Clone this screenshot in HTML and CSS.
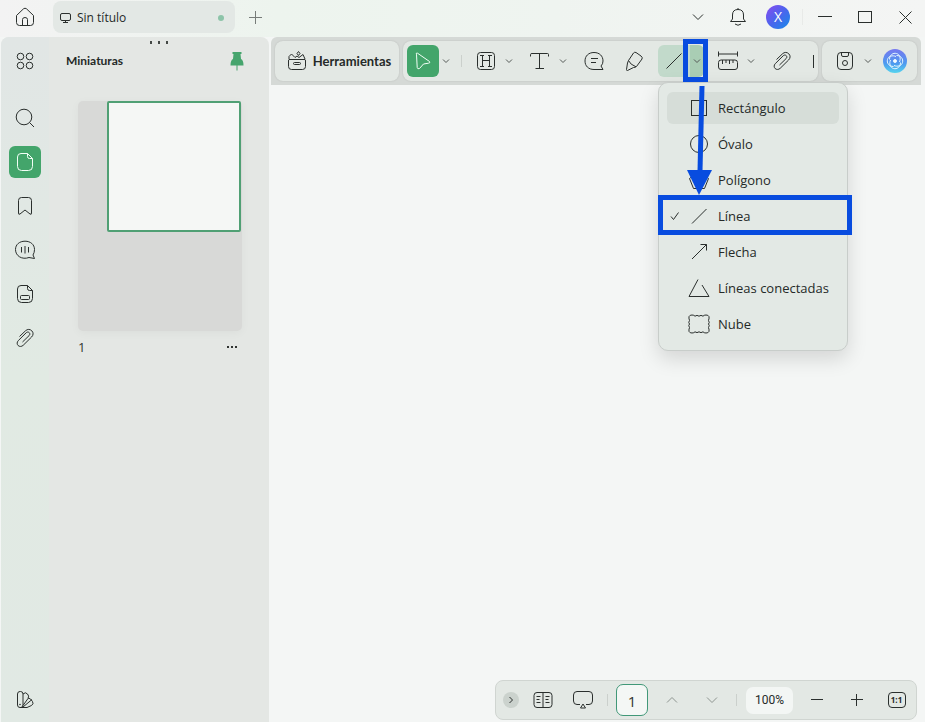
FILE: index.html
```html
<!DOCTYPE html>
<html lang="es">
<head>
<meta charset="utf-8">
<title>Sin título</title>
<link rel="stylesheet" href="styles.css">
</head>
<body>
<svg class="defs" aria-hidden="true">
  <symbol id="chev" viewBox="0 0 8 8"><path d="M1 2.500 4 5.500 7 2.500"/></symbol>
  <symbol id="clip" viewBox="0 0 20 20"><path d="M4.500 8.500 10.500 2.800C12.500.9 15 1 16.800 2.800s1.700 4.300-.2 6.200L8.200 17.300c-1.600 1.500-3.800 1.500-5.100.2s-1.300-3.400.2-4.900l8-7.900c1-.9 2.200-.9 3 0s.7 2-.2 2.900L7.500 14"/></symbol>
</svg>
<header class="titlebar">
  <button class="home" aria-label="Inicio"><svg width="20" height="20" viewBox="0 0 20 20"><path d="M1.500 8.500 8.500 1.800Q10 .6 11.500 1.800L18.500 8.500V15.500Q18.500 18.500 15.500 18.500H4.500Q1.500 18.500 1.500 15.500ZM7.500 18.500V12.500Q7.500 10.500 10 10.500T12.500 12.500V18.500"/></svg></button>
  <div class="tab">
    <svg width="13" height="12" viewBox="0 0 13 12"><rect x="1.500" y="1.500" width="10" height="7" rx="1.500"/><path d="M6.500 8.500V10.500M4 10.500H9"/></svg>
    <span>Sin título</span><i class="unsaved"></i>
  </div>
  <button class="new-tab" aria-label="Nueva pestaña"><svg class="gray" width="13" height="13" viewBox="0 0 13 13"><path d="M6.500 0V13M0 6.500H13"/></svg></button>
  <div class="window-tools">
    <button aria-label="Más"><svg width="12" height="8" viewBox="0 0 12 8"><path d="M1 1.500 6 6.500 11 1.500"/></svg></button>
    <button aria-label="Avisos"><svg width="18" height="20" viewBox="0 0 18 20"><path d="M1.500 14.500H16.500L14.500 12V8Q14.500 2.500 9 2.500T3.500 8V12ZM9 2.500V1M6 17Q9 19.500 12 17"/></svg></button>
    <button aria-label="Cuenta"><span class="avatar">X</span></button>
    <i class="window-sep"></i>
    <button aria-label="Minimizar"><svg width="14" height="14" viewBox="0 0 14 14"><path d="M0 6.500H14"/></svg></button>
    <button aria-label="Maximizar"><svg width="14" height="12" viewBox="0 0 14 12"><rect x=".5" y=".5" width="13" height="11"/></svg></button>
    <button aria-label="Cerrar"><svg width="13" height="13" viewBox="0 0 13 13"><path d="M.5.5 12.500 12.500M12.500.5.5 12.500"/></svg></button>
  </div>
</header>
<div class="workspace">
  <aside class="side">
    <nav class="rail">
      <button class="apps" aria-label="Aplicaciones"><svg width="18" height="18" viewBox="0 0 18 18"><circle cx="4.500" cy="4.500" r="3.300"/><circle cx="13.500" cy="4.500" r="3.300"/><circle cx="4.500" cy="13.500" r="3.300"/><circle cx="13.500" cy="13.500" r="3.300"/></svg></button>
      <button aria-label="Buscar"><svg width="20" height="20" viewBox="0 0 20 20"><circle cx="9" cy="9" r="7.800"/><path d="M14.500 14.500 19 19"/></svg></button>
      <button class="active" aria-label="Miniaturas"><svg width="18" height="20" viewBox="0 0 18 20"><path d="M5 1.500H11.500L16.500 6.500V14.500Q16.500 18.500 12.500 18.500H5.500Q1.500 18.500 1.500 14.500V5Q1.500 1.500 5 1.500ZM11.500 1.500V4.500Q11.500 6.500 13.500 6.500H16.500"/></svg></button>
      <button aria-label="Marcadores"><svg width="16" height="20" viewBox="0 0 16 20"><path d="M1.500 17V4.500Q1.500 1.500 4.500 1.500H11.500Q14.500 1.500 14.500 4.500V17Q14.500 19 13 18L8 14 3 18Q1.500 19 1.500 17Z"/></svg></button>
      <button aria-label="Comentarios"><svg width="22" height="20" viewBox="0 0 22 20"><path d="M19 15 20.500 18.500 15 17.500C8 20 1.500 16 1.500 9.500 1.500 4.500 5.500 1.200 11 1.200S20.500 4.500 20.500 9.500Q20.500 12.500 19 15ZM7.500 7V12.500M11 6V13.500M14.500 7V12.500"/></svg></button>
      <button aria-label="Campos"><svg width="18" height="20" viewBox="0 0 18 20"><path d="M5 1.500H11.500L16.500 6.500V14.500Q16.500 18.500 12.500 18.500H5.500Q1.500 18.500 1.500 14.500V5Q1.500 1.500 5 1.500ZM11.500 1.500V4.500Q11.500 6.500 13.500 6.500H16.500"/><rect x="4.500" y="11.500" width="9" height="4" rx="1"/></svg></button>
      <button aria-label="Adjuntos"><svg width="20" height="20"><use href="#clip"/></svg></button>
      <button class="theme" aria-label="Temas"><svg width="20" height="20" viewBox="0 0 20 20"><rect x="2.500" y="1.500" width="5.500" height="16" rx="2.500"/><path d="M8 4Q10.500 1.500 12.500 4 14.500 6 13 8.500L8 15.500M13 8Q15.500 8 17.500 11.500 19 14 16.500 15.500L12 17.500H5M17 9.500 8 17"/><circle cx="5" cy="14.500" r=".4"/></svg></button>
    </nav>
    <section class="thumbs">
      <div class="grip"><i></i><i></i><i></i></div>
      <div class="thumbs-head"><h2>Miniaturas</h2>
        <button aria-label="Fijar"><svg class="pin" width="14" height="20" viewBox="0 0 14 20"><path d="M2.500 1H11.500V3H10.500L11 8Q13.500 9 13.500 14.500H.5Q.5 9 3 8L3.500 3H2.500Z"/><path d="M6.500 13H7.500V19.500H6.500Z"/></svg></button>
      </div>
      <div class="thumb"><div class="page"></div></div>
      <div class="thumb-label"><span>1</span><button class="dots" aria-label="Opciones"><i></i><i></i><i></i></button></div>
    </section>
  </aside>
  <main class="document">
    <div class="toolbar">
      <button class="group tools"><svg width="20" height="20" viewBox="0 0 20 20"><path d="M2 8.500H18Q18.500 8.500 18.500 10V15.500Q18.500 18.500 15.500 18.500H4.500Q1.500 18.500 1.500 15.500V10Q1.500 8.500 2 8.500ZM2 8V5.500L4.500 3 8 6.500 10 5 12 6.500 16 3.500 18 8M11.500.5 13 2.500 11.500 4.500 10 2.500Z"/><rect x="6.500" y="11.500" width="7" height="2" rx="1"/></svg>Herramientas</button>
      <div class="group edit">
        <button class="tool selected" aria-label="Seleccionar"><svg width="18" height="18" viewBox="0 0 18 18"><path d="M2.500 2.200Q1.500.8 3.500 1.200L15.500 9.500Q16.500 11 14.500 11.200L9.500 12 5.500 16.500Q3.500 17.500 3.200 15.500Z"/></svg></button><button class="drop" aria-label="Opciones de selección"><svg width="8" height="8"><use href="#chev"/></svg></button>
        <i class="sep"></i>
        <button class="tool" aria-label="Resaltar"><svg width="20" height="20" viewBox="0 0 20 20"><rect x="1.500" y="1.500" width="17" height="17" rx="3"/><path d="M4 4.500H8M12 4.500H16M4 15.500H8M12 15.500H16M6.500 4.500V15.500M13.500 4.500V15.500M6.500 9.500H13.500"/></svg></button><button class="drop" aria-label="Opciones de resaltado"><svg width="8" height="8"><use href="#chev"/></svg></button>
        <button class="tool next" aria-label="Texto"><svg width="20" height="20" viewBox="0 0 20 20"><path d="M.5 5.500V3.500Q.5 2.500 2 2.500H17.500Q18.500 2.500 18.500 3.500V5.500M9.500 2.500V17.500M5.500 17.500H14"/></svg></button><button class="drop" aria-label="Opciones de texto"><svg width="8" height="8"><use href="#chev"/></svg></button>
        <button class="tool next" aria-label="Nota"><svg width="20" height="20" viewBox="0 0 20 20"><path d="M17 15 19 18.500H10C4.500 18.500 1 15 1 10S4.500 1.500 10 1.500 19 5 19 10Q19 13 17 15ZM7 7.500H14M7 11.500H12"/></svg></button>
        <button class="tool next" aria-label="Marcador"><svg width="20" height="20" viewBox="0 0 20 20"><path d="M4.500 9.500 9.500 2Q10.500.8 12 1.500L17 5Q18.800 6.300 18 8L12.500 15.500Q11.500 16.500 9.500 16.500L3.500 19.500Q2.500 19.800 2.500 18.500L3.500 12ZM4.500 9.500Q6 13.500 12 15.800"/></svg></button>
        <div class="shape next">
          <button class="tool" aria-label="Línea"><svg width="18" height="18" viewBox="0 0 18 18"><path d="M1.500 16.500 16.500 1.500"/></svg></button><button class="drop" aria-label="Elegir forma" aria-expanded="true"><svg width="8" height="8"><use href="#chev"/></svg></button>
          <div class="menu" role="menu">
            <button class="hover" role="menuitem"><svg width="22" height="20" viewBox="0 0 22 20"><rect x="3.500" y="2.500" width="15" height="15"/></svg>Rectángulo</button>
            <button role="menuitem"><svg width="22" height="20" viewBox="0 0 22 20"><circle cx="11" cy="10" r="8.500"/></svg>Óvalo</button>
            <button role="menuitem"><svg width="22" height="20" viewBox="0 0 22 20"><path d="M11 1.500 20.500 8.500 16.500 18.500H5.500L1.500 8.500Z"/></svg>Polígono</button>
            <button class="checked" role="menuitem"><svg width="10" height="10" viewBox="0 0 10 10"><path d="M1 5.500 3.500 8.500 8.500 1.500"/></svg><svg width="22" height="20" viewBox="0 0 22 20"><path d="M4 17.500 18.500 3"/></svg>Línea</button>
            <button role="menuitem"><svg width="22" height="20" viewBox="0 0 22 20"><path d="M4 17 18.500 2.500M12.500 2.500H18.500V8.500"/></svg>Flecha</button>
            <button role="menuitem"><svg width="22" height="20" viewBox="0 0 22 20"><path d="M10 1.500 1 18.500H21L14 7"/></svg>Líneas conectadas</button>
            <button role="menuitem"><svg width="22" height="20" viewBox="0 0 22 20"><path d="M1.500 6.500Q-.5 1 4 1 6 1 7 2.200 9 .5 11 2.200 13 .5 15 2.200 16 1 18 1 22.500 1 20.500 6.500 22 8.500 20.500 10 22 11.500 20.500 13.500 22.500 19 18 19 16 19 15 17.800 13 19.500 11 17.800 9 19.500 7 17.800 6 19 4 19-.5 19 1.500 13.500 0 11.500 1.500 10 0 8.500 1.500 6.500Z"/></svg>Nube</button>
          </div>
          <svg class="callout" width="196" height="198" viewBox="0 0 196 198" aria-hidden="true"><rect class="frame" x="27.500" y="4.500" width="20" height="38"/><rect class="frame" x="2.500" y="160.500" width="189" height="35"/><path class="shaft" d="M44 49 42 134"/><path class="head" d="M29 133H54L41 158Z"/></svg>
        </div>
        <button class="tool next" aria-label="Medir"><svg width="20" height="20" viewBox="0 0 20 20"><path d="M.5.500V5.500M19.500.500V5.500M.5 3H19.500"/><rect x=".5" y="9" width="19" height="9.500" rx="2.500"/><path d="M4.500 9V13M8 9V12M11.500 9V13M15 9V12"/></svg></button><button class="drop" aria-label="Opciones de medida"><svg width="8" height="8"><use href="#chev"/></svg></button>
        <button class="tool next" aria-label="Adjuntar"><svg width="20" height="20"><use href="#clip"/></svg></button>
        <i class="overflow"></i>
      </div>
      <div class="group extra">
        <button class="tool" aria-label="Guardar"><svg width="18" height="20" viewBox="0 0 18 20"><rect x="1.500" y="1.500" width="15" height="17" rx="3.500"/><path d="M5.500 1.500V4Q5.500 5.500 7 5.500H11Q12.500 5.500 12.500 4V1.500"/><circle cx="9" cy="12" r="2.500"/></svg></button><button class="drop" aria-label="Opciones de guardado"><svg width="8" height="8"><use href="#chev"/></svg></button>
        <button class="tool" aria-label="Asistente"><span class="assistant"><svg width="20" height="20" viewBox="0 0 20 20"><path id="petal" d="M4.500 8.500C4.500 4 8 1.500 11.500 2.500 15 3.500 16 7.500 14.500 11"/><use href="#petal" transform="rotate(90 10 10)"/><use href="#petal" transform="rotate(180 10 10)"/><use href="#petal" transform="rotate(270 10 10)"/><circle class="dot" cx="10" cy="10" r="1.500"/></svg></span></button>
      </div>
    </div>
    <div class="canvas"></div>
    <div class="pager">
      <button class="collapse" aria-label="Contraer"><svg width="8" height="8" viewBox="0 0 8 8"><path d="M2.500 1 5.500 4 2.500 7"/></svg></button>
      <button class="view book" aria-label="Vista de lectura"><svg width="20" height="18" viewBox="0 0 20 18"><rect x="1" y="1.500" width="18" height="15" rx="3"/><path d="M10 1.500V16.500M3.500 5.500H7.500M3.500 8.500H6.500M3.500 11.500H7.500M12.500 5.500H16.500M12.500 8.500H15.500M12.500 11.500H16.500"/></svg></button>
      <button class="view" aria-label="Presentación"><svg width="20" height="18" viewBox="0 0 20 18"><path d="M7 13.500H4Q.5 13.500 .5 10V4Q.5.500 4 .5H16Q19.500.500 19.500 4V10Q19.500 13.500 16 13.500H13M10 13 12.500 17H7.500Z"/></svg></button>
      <i class="sep"></i>
      <input class="page-number" aria-label="Página" value="1">
      <button class="step" aria-label="Página anterior"><svg class="faint" width="12" height="8" viewBox="0 0 12 8"><path d="M1 6.500 6 1.500 11 6.500"/></svg></button>
      <button class="step" aria-label="Página siguiente"><svg class="faint" width="12" height="8" viewBox="0 0 12 8"><path d="M1 1.500 6 6.500 11 1.500"/></svg></button>
      <i class="sep"></i>
      <button class="zoom-level">100%</button>
      <button class="step" aria-label="Reducir"><svg width="12" height="12" viewBox="0 0 12 12"><path d="M0 5.500H12"/></svg></button>
      <button class="step" aria-label="Ampliar"><svg width="12" height="12" viewBox="0 0 12 12"><path d="M0 5.500H12M5.500 0V12"/></svg></button>
      <button class="step" aria-label="Tamaño real"><span class="actual">1:1</span></button>
    </div>
  </main>
</div>
</body>
</html>
```
FILE: styles.css
```css
* { box-sizing: border-box; }
body {
  margin: 0;
  height: 100vh;
  display: flex;
  flex-direction: column;
  background: #f4f6f5;
  color: #252a28;
  font: 13px/20px "Open Sans", "Noto Sans", sans-serif;
}
button {
  display: flex;
  align-items: center;
  justify-content: center;
  flex: none;
  padding: 0;
  border: 0;
  background: none;
  color: inherit;
  font: inherit;
}
svg { flex: none; fill: none; stroke: #2a2f2d; stroke-width: 1; }
.defs { position: absolute; width: 0; height: 0; }
h2 { margin: 0; font: 700 12px/20px Lato, sans-serif; }

.titlebar { display: flex; align-items: center; height: 37px; padding: 0 0 3px 9px; flex: none; background: linear-gradient(90deg, #f3f3f3, #edf4ee 30%, #eff4f0 60%, #f4f5f4); }
.home { width: 32px; height: 32px; }
.tab { display: flex; align-items: center; gap: 5px; width: 182px; height: 32px; margin-left: 12px; padding: 1px 11px 0 6px; border-radius: 8px; background: #e3e8e5; font-size: 12px; }
.unsaved { width: 6px; height: 6px; margin-left: auto; border-radius: 50%; background: #8dc4a9; }
.new-tab { width: 40px; height: 32px; }
.gray { stroke: #777c79; }
.window-tools { display: flex; align-items: center; margin-left: auto; }
.window-tools button { width: 40px; height: 32px; }
.window-sep { width: 1px; height: 16px; margin: 0 2px 0 4px; background: #e8eae8; }
.avatar { width: 24px; height: 24px; border-radius: 50%; background: linear-gradient(135deg, #8a4cf0, #4a65ed 50%, #168be8); color: #fff; font-size: 14px; line-height: 24px; }

.workspace { display: flex; flex: 1; min-height: 0; gap: 2px; padding: 0 4px 0 1px; }
.side { display: flex; flex: none; width: 268px; border-radius: 8px 8px 0 0; background: #e4e7e4; }
.rail { display: flex; flex-direction: column; align-items: center; gap: 12px; width: 48px; padding: 8px 0 6px; border-radius: 8px 0 0 0; background: linear-gradient(#e1e6e5, #e1eae3 50%, #e1e9e4); }
.rail button { width: 32px; height: 32px; border-radius: 6px; }
.rail .apps { margin-bottom: 13px; }
.rail .active { background: #43a56b; }
.rail .theme { margin-top: auto; }
.active svg, .selected svg { stroke: #f2fff6; }
.thumbs { flex: 1; }
.grip, .dots { display: flex; gap: 4px; }
.grip { justify-content: center; padding: 4px 0 3px; }
.grip i { width: 2px; height: 3px; margin: 0 1px; background: #444946; }
.thumbs-head { display: flex; align-items: center; justify-content: space-between; height: 28px; padding: 0 25px 0 17px; }
.pin { fill: #46a56d; stroke: none; }
.thumb { height: 230px; margin: 26px 27px 0 29px; padding-right: 1px; border-radius: 5px; background: #d8d9d7; box-shadow: 0 2px 10px #0000000a; }
.page { width: 134px; height: 131px; margin-left: auto; border: 2px solid #50a074; border-radius: 2px; background: #f5f7f5; }
.thumb-label { display: flex; align-items: center; justify-content: space-between; margin: 6px 31px 0 29px; color: #303431; }
.dots { gap: 1px; height: 12px; }
.dots i { width: 2px; height: 2px; margin-right: 1px; background: #303431; }

.document { display: flex; flex: 1; flex-direction: column; min-width: 0; }
.toolbar { display: flex; gap: 4px; padding: 4px; border-radius: 6px 6px 0 0; background: #d5d9d6; }
.group { display: flex; align-items: center; height: 40px; border-radius: 8px; background: #e3e8e4; box-shadow: 0 0 2px #0002; }
.tools { gap: 6px; width: 124px; padding-left: 4px; font: 700 13px/20px Lato, sans-serif; }
.edit { flex: 1; min-width: 0; padding-left: 4px; }
.tool { width: 32px; height: 32px; border-radius: 6px; }
.selected { background: #43a56b; }
.drop { width: 14px; height: 32px; }
.drop svg { stroke: #555a57; }
.next { margin-left: 8px; }
.sep { flex: none; width: 1px; height: 12px; margin: 0 8px; background: #cbd0cc; }
.overflow { width: 1px; height: 13px; margin-left: 15px; background: #2a2f2d; }
.extra { width: 95px; padding-left: 7px; }
.drop + .tool:last-child { margin-left: 4px; }
.assistant { display: flex; align-items: center; justify-content: center; width: 24px; height: 24px; border-radius: 50%; background: linear-gradient(#7778ef, #4e9aef 60%, #55d4ee); }
.assistant svg { stroke: #e8f8ff; }
.assistant .dot { fill: #fff; }
.shape { position: relative; display: flex; flex: none; border-radius: 6px; background: #c2dacb; }
.shape > .drop { border-radius: 0 6px 6px 0; background: #a9cdb4; }

.menu { position: absolute; top: 37px; left: 0; z-index: 1; display: grid; gap: 4px; width: 190px; padding: 9px 8px 10px; border: 1px solid #c8cdca; border-radius: 10px; background: #e3e9e5; box-shadow: 0 8px 20px #0002; }
.menu button { justify-content: flex-start; gap: 8px; height: 32px; padding-left: 21px; border-radius: 6px; }
.menu .hover { background: #d6ddd8; }
.menu .checked { padding-left: 3px; }
.callout { position: absolute; z-index: 2; top: -8px; left: 0; pointer-events: none; }
.frame, .shaft { stroke: #084cdf; stroke-width: 5; }
.head { fill: #084cdf; stroke: none; }

.canvas { flex: 1; }
.pager { display: flex; align-items: center; align-self: flex-end; flex: none; height: 40px; margin: 0 4px 2px 0; border: 1px solid #d0d5d1; border-radius: 8px; background: #e3e8e4; }
.collapse { width: 16px; height: 16px; margin: 0 8px 0 7px; border-radius: 50%; background: #cbd2cd; }
.view { width: 32px; height: 32px; }
.book { margin-right: 8px; }
.page-number { width: 32px; height: 32px; padding: 2px 0 0; border: 1px solid #419878; border-radius: 7px; background: #f4f7f5; color: #303431; font: 15px/20px "Open Sans", sans-serif; text-align: center; }
.step { width: 40px; height: 32px; }
.step:last-child { width: 39px; }
.page-number + .step { margin-left: 4px; }
.step + .sep { margin: 0 9px 0 4px; }
.faint { stroke: #8e9590; }
.zoom-level { width: 47px; height: 27px; margin-right: 4px; border-radius: 7px; background: #f3f6f4; font: 12px/20px Roboto, sans-serif; }
.actual { width: 18px; height: 16px; border: 1px solid #2a2f2d; border-radius: 4px; font: 700 8px/14px "Open Sans", sans-serif; }
```
